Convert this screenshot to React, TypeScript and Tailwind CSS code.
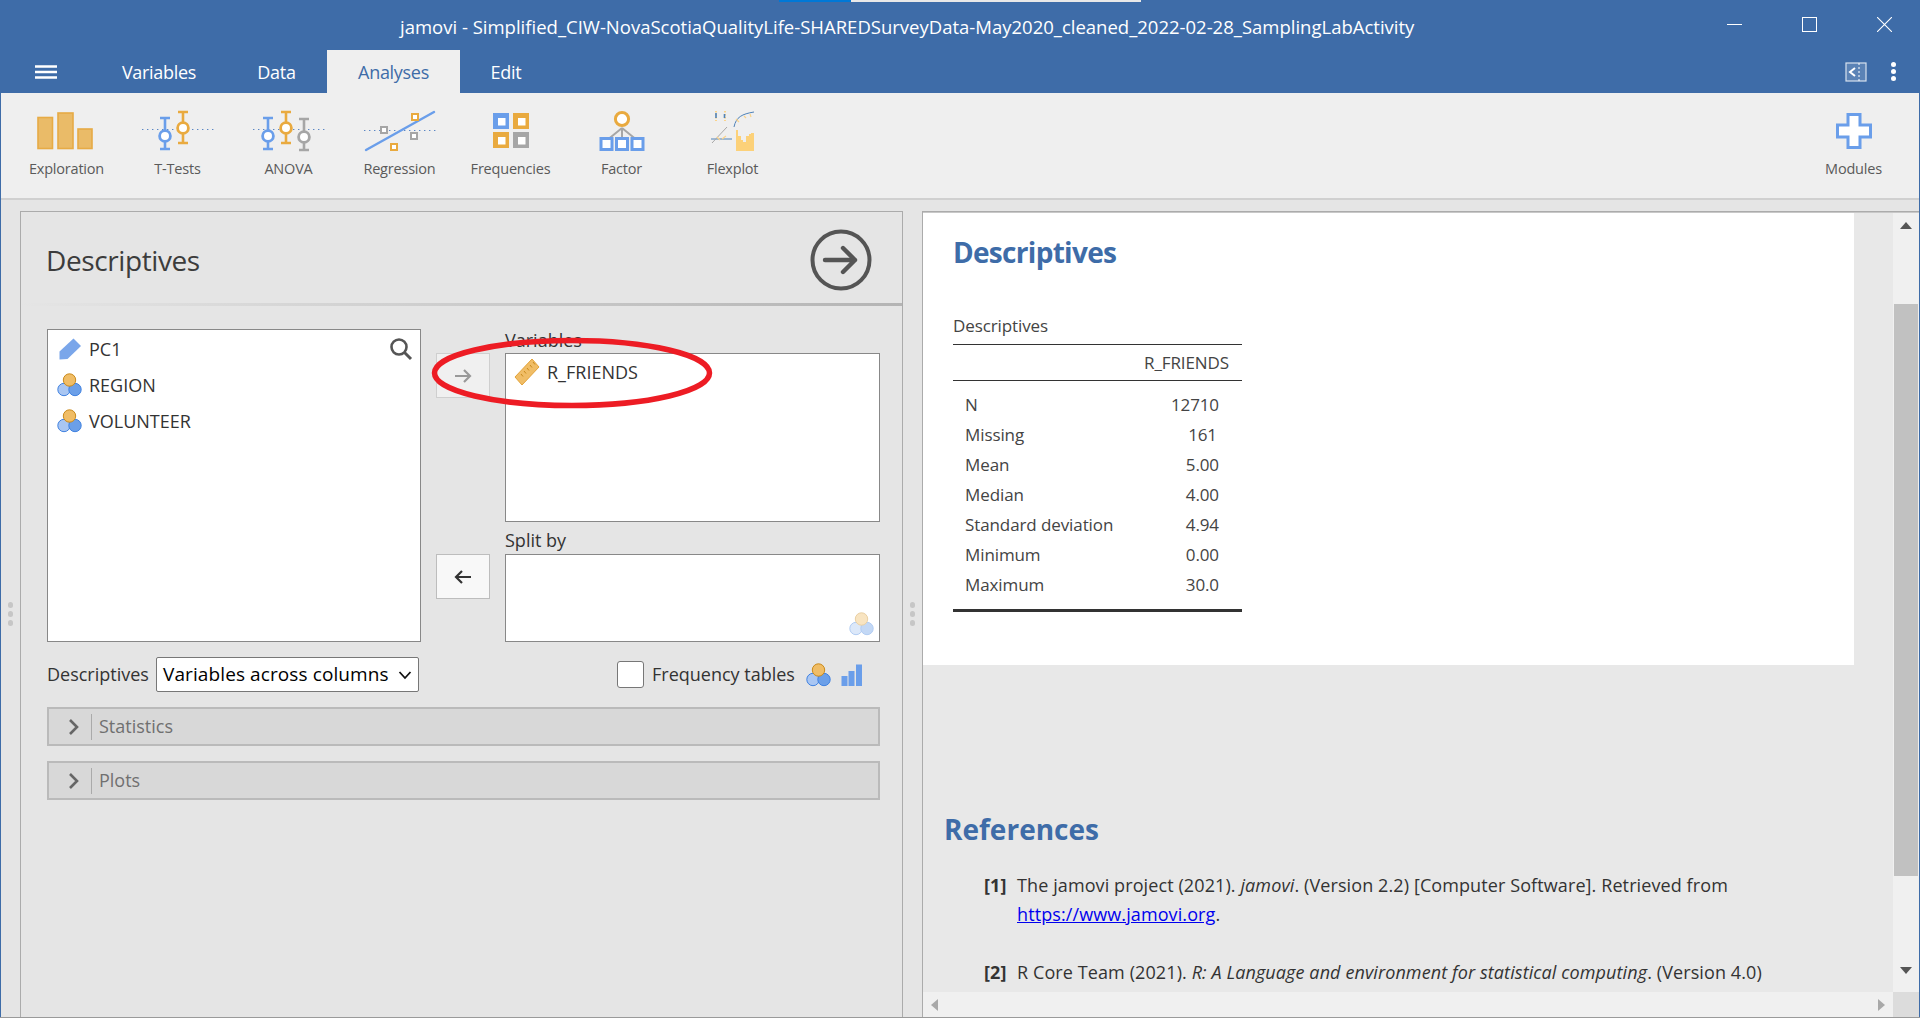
import React from "react";

const F = "font-['Open_Sans','Noto_Sans',sans-serif]";

function Nominal({ dim = false }: { dim?: boolean }) {
  return (
    <svg width="25" height="24" viewBox="0 0 25 24" className={dim ? "opacity-40 shrink-0" : "shrink-0"}>
      <circle cx="7" cy="16.5" r="6.2" fill="#a9c6f2" stroke="#3f81e0" strokeWidth="1" />
      <circle cx="18" cy="16.5" r="6.2" fill="#6b9fe8" stroke="#3f81e0" strokeWidth="1" />
      <circle cx="12.5" cy="7" r="6.2" fill="#f0bd66" stroke="#c98a1c" strokeWidth="1" />
    </svg>
  );
}

function Pencil() {
  return (
    <svg width="25" height="24" viewBox="0 0 25 24" className="shrink-0">
      <path d="M16.5 1.5 L24 9 L10.5 22 L2.5 22.5 L2.5 14.5 Z" fill="#7aa6ea" />
    </svg>
  );
}

function Ruler() {
  return (
    <svg width="26" height="28" viewBox="0 0 26 28" className="shrink-0">
      <path d="M18 1 L25 9 L8 27 L1 19 Z" fill="#f0bd66" stroke="#e3a33a" strokeWidth="1" />
      <path d="M7 16 L9 18.5 M10 13 L12 15.5 M13 10 L15 12.5 M16 7 L18 9.5 M19 4 L21 6.5" stroke="#c98a1c" strokeWidth="1" />
    </svg>
  );
}

function IconExploration() {
  return (
    <svg width="56" height="38" viewBox="0 0 56 38" className="mr-[4px]">
      <g fill="#eabb68" stroke="#e7ab45" strokeWidth="1.6">
        <rect x="1" y="5.5" width="14.5" height="31" />
        <rect x="21" y="1" width="15" height="35.5" />
        <rect x="41" y="17" width="14" height="19.5" />
      </g>
    </svg>
  );
}

function Whisker({ x, top, bottom, c, cy }: { x: number; top: number; bottom: number; c: string; cy: number }) {
  return (
    <g stroke={c} fill="none">
      <path d={`M${x - 5} ${top} H${x + 5} M${x - 5} ${bottom} H${x + 5} M${x} ${top} V${bottom}`} strokeWidth="2.6" />
      <circle cx={x} cy={cy} r="5.4" fill="#fff" strokeWidth="2.8" />
    </g>
  );
}

function IconTTests() {
  return (
    <svg width="72" height="42" viewBox="0 0 72 42">
      <path d="M0 19.5 H72" stroke="#5b86c4" strokeDasharray="1.4 3.6" strokeWidth="1" />
      <Whisker x={23} top={8} bottom={39} c="#6a9eea" cy={26} />
      <Whisker x={41} top={2} bottom={33} c="#e9aa3f" cy={18} />
    </svg>
  );
}

function IconAnova() {
  return (
    <svg width="72" height="42" viewBox="0 0 72 42">
      <path d="M0 19.5 H72" stroke="#5b86c4" strokeDasharray="1.4 3.6" strokeWidth="1" />
      <Whisker x={15} top={8} bottom={39} c="#6a9eea" cy={26} />
      <Whisker x={33} top={2} bottom={33} c="#e9aa3f" cy={18} />
      <Whisker x={51} top={9} bottom={40} c="#a6a6a6" cy={27} />
    </svg>
  );
}

function Sq({ x, y, c }: { x: number; y: number; c: string }) {
  return <rect x={x} y={y} width="6" height="6" fill="#fff" stroke={c} strokeWidth="2" />;
}

function IconRegression() {
  return (
    <svg width="72" height="42" viewBox="0 0 72 42">
      <path d="M0 20.5 H72" stroke="#5b86c4" strokeDasharray="1.4 3.6" strokeWidth="1" />
      <path d="M2 40 L70 2" stroke="#6a9eea" strokeWidth="2.4" strokeLinecap="round" />
      <Sq x={48} y={4} c="#e9aa3f" />
      <Sq x={17} y={17} c="#a6a6a6" />
      <Sq x={47} y={23} c="#a6a6a6" />
      <Sq x={27} y={34} c="#e9aa3f" />
    </svg>
  );
}

function Cell({ x, y, c }: { x: number; y: number; c: string }) {
  return (
    <g>
      <rect x={x} y={y} width="16" height="16" fill={c} />
      <rect x={x + 5} y={y + 5} width="7.5" height="7.5" fill="#fff" />
    </g>
  );
}

function IconFrequencies() {
  return (
    <svg width="36" height="36" viewBox="0 0 36 36">
      <Cell x={0} y={0} c="#6a9eea" />
      <Cell x={20} y={0} c="#e9aa3f" />
      <Cell x={0} y={19} c="#e9aa3f" />
      <Cell x={20} y={19} c="#a6a6a6" />
    </svg>
  );
}

function IconFactor() {
  return (
    <svg width="46" height="42" viewBox="0 0 46 42">
      <path d="M23 18 L7 31 M23 18 V31 M23 18 L39 31" stroke="#a6a6a6" strokeWidth="2" />
      <circle cx="23" cy="9" r="6.6" fill="#fff" stroke="#e9aa3f" strokeWidth="3" />
      {[2, 17.5, 33].map((x) => (
        <rect key={x} x={x} y="28.5" width="11" height="11" fill="#fff" stroke="#6a9eea" strokeWidth="3" />
      ))}
    </svg>
  );
}

function IconFlexplot() {
  return (
    <svg width="46" height="46" viewBox="0 0 46 44">
      <path d="M28 44 V23 H30 V29 H33 V33 H35 V35 H38 V29 H41 V27 H43 V26 H46 V44 Z" fill="#fcd179" transform="translate(-2 -2)" />
      <path d="M24 18 C26 8 32 5 44 3" stroke="#4f82b8" strokeWidth="1" fill="none" />
      <path d="M1 30 H22" stroke="#4f82b8" strokeWidth="1" />
      <path d="M2 34 L17 18" stroke="#a8a8a8" strokeWidth="1" />
      <path d="M6 2 V12 M15 2 V12" stroke="#fbd38a" strokeWidth="2" strokeDasharray="1.5 1.5" />
      <path d="M6 4 V9 M14.5 5 V9" stroke="#4f82b8" strokeWidth="1.6" />
      <path d="M26 10 L29 13 M34 7 L36 9 M40 5 L41 8 M12 30 L16 27 M7 28 L10 31" stroke="#fbd38a" strokeWidth="1.2" />
    </svg>
  );
}

function IconModules() {
  return (
    <svg width="36" height="36" viewBox="0 0 36 36">
      <path d="M12 1.5 H24 V12 H34.5 V24 H24 V34.5 H12 V24 H1.5 V12 H12 Z" fill="#fff" stroke="#6a9eea" strokeWidth="3" />
    </svg>
  );
}

function RibbonButton({ label, children }: { label: string; children: React.ReactNode }) {
  return (
    <div className="w-[111px] h-[72px] flex flex-col items-center justify-between">
      <div className="h-[48px] flex items-center justify-center">{children}</div>
      <span className="text-[14.5px] leading-[20px] text-[#5a5a5a] whitespace-nowrap tracking-[-0.2px]">{label}</span>
    </div>
  );
}

function Tab({ label, active, w }: { label: string; active?: boolean; w: string }) {
  return (
    <div
      className={`${w} h-[43px] flex items-center justify-center pt-[1px] text-[18px] tracking-[-0.3px] ${
        active ? "bg-[#efefef] text-[#3e6ca8]" : "text-white"
      }`}
    >
      {label}
    </div>
  );
}

function ListItem({ icon, label }: { icon: React.ReactNode; label: string }) {
  return (
    <div className="h-[36px] flex items-center gap-[7px] pl-[9px] text-[18px] text-[#333]">
      {icon}
      <span>{label}</span>
    </div>
  );
}

function Accordion({ label }: { label: string }) {
  return (
    <div className="h-[39px] bg-[#d8d8d8] border-2 border-[#bababa] flex items-center">
      <svg width="14" height="20" viewBox="0 0 14 20" className="ml-[18px]">
        <path d="M3 3 L10 10 L3 17" fill="none" stroke="#666" strokeWidth="2.6" />
      </svg>
      <div className="w-px h-[26px] bg-[#aaa] ml-[10px]" />
      <span className="ml-[7px] text-[18px] text-[#707070]">{label}</span>
    </div>
  );
}

function ArrowBtn({ dir, className }: { dir: "r" | "l"; className: string }) {
  return (
    <div className={`w-[54px] h-[45px] flex items-center justify-center border ${className}`}>
      <svg width="20" height="18" viewBox="0 0 20 18" fill="none" strokeWidth="2.2" stroke={dir === "r" ? "#999" : "#333"}>
        {dir === "r" ? <path d="M2 9 H17 M11 3 L17 9 L11 15" /> : <path d="M18 9 H3 M9 3 L3 9 L9 15" />}
      </svg>
    </div>
  );
}

function Grip() {
  return (
    <div className="w-[20px] shrink-0 flex flex-col items-center justify-center gap-[3px] pr-[1px]">
      <div className="w-[5px] h-[6px] rounded-full bg-[#c6c6c6]" />
      <div className="w-[5px] h-[6px] rounded-full bg-[#c6c6c6]" />
      <div className="w-[5px] h-[6px] rounded-full bg-[#c6c6c6]" />
    </div>
  );
}

const rows: [string, string, string][] = [
  ["N", "12710", "pr-[23px]"],
  ["Missing", "161", "pr-[25px]"],
  ["Mean", "5.00", "pr-[23px]"],
  ["Median", "4.00", "pr-[23px]"],
  ["Standard deviation", "4.94", "pr-[23px]"],
  ["Minimum", "0.00", "pr-[23px]"],
  ["Maximum", "30.0", "pr-[23px]"],
];

export default function App() {
  return (
    <div className={`${F} w-[1920px] h-[1018px] overflow-hidden relative flex flex-col bg-[#3e6ca8]`}>
      {/* top strip */}
      <div className="absolute top-0 left-[779px] w-[72px] h-[2px] bg-[#0078d7]" />
      <div className="absolute top-0 left-[851px] w-[290px] h-[2px] bg-[#e8e8e8]" />

      {/* title bar */}
      <div className="h-[50px] shrink-0 flex items-center relative pl-[400px] pt-[4px] text-white">
        <span className="text-[18.5px] whitespace-nowrap">
          jamovi - Simplified_CIW-NovaScotiaQualityLife-SHAREDSurveyData-May2020_cleaned_2022-02-28_SamplingLabActivity
        </span>
        <div className="absolute right-[28px] top-[17px] flex items-center gap-[60px]">
          <svg width="15" height="15" viewBox="0 0 15 15"><path d="M0 7.5 H15" stroke="#fff" strokeWidth="1" /></svg>
          <svg width="15" height="15" viewBox="0 0 15 15"><rect x="0.5" y="0.5" width="14" height="14" fill="none" stroke="#fff" strokeWidth="1" /></svg>
          <svg width="15" height="15" viewBox="0 0 15 15"><path d="M0 0 L15 15 M15 0 L0 15" stroke="#fff" strokeWidth="1.1" /></svg>
        </div>
      </div>

      {/* tab row */}
      <div className="h-[43px] shrink-0 flex items-center relative">
        <div className="w-[92px] flex justify-center">
          <svg width="24" height="16" viewBox="0 0 24 16">
            <path d="M1 2.5 H23 M1 8 H23 M1 13.5 H23" stroke="#fff" strokeWidth="2.4" />
          </svg>
        </div>
        <Tab label="Variables" w="w-[134px]" />
        <Tab label="Data" w="w-[101px]" />
        <Tab label="Analyses" w="w-[133px]" active />
        <Tab label="Edit" w="w-[92px]" />
        <div className="ml-auto flex items-center gap-[24px] pr-[24px]">
          <svg width="22" height="20" viewBox="0 0 22 20">
            <rect x="1" y="1" width="20" height="18" fill="#5b83b6" stroke="#d8e2ef" strokeWidth="1.2" />
            <path d="M10 6 L5 10 L10 14" fill="none" stroke="#fff" strokeWidth="2" />
            <path d="M14 1 V19" stroke="#fff" strokeWidth="1" strokeDasharray="2 2" />
          </svg>
          <div className="flex flex-col gap-[2px]">
            <div className="w-[5px] h-[5px] rounded-full bg-white" />
            <div className="w-[5px] h-[5px] rounded-full bg-white" />
            <div className="w-[5px] h-[5px] rounded-full bg-white" />
          </div>
        </div>
      </div>

      {/* ribbon */}
      <div className="h-[107px] shrink-0 ml-[1px] mr-[1px] bg-[#efefef] border-b-2 border-[#d0d0d0] flex items-start pt-[14px] pl-[10px] pr-[10px]">
        <RibbonButton label="Exploration"><IconExploration /></RibbonButton>
        <RibbonButton label="T-Tests"><IconTTests /></RibbonButton>
        <RibbonButton label="ANOVA"><IconAnova /></RibbonButton>
        <RibbonButton label="Regression"><IconRegression /></RibbonButton>
        <RibbonButton label="Frequencies"><IconFrequencies /></RibbonButton>
        <RibbonButton label="Factor"><IconFactor /></RibbonButton>
        <RibbonButton label="Flexplot"><IconFlexplot /></RibbonButton>
        <div className="ml-auto">
          <RibbonButton label="Modules"><IconModules /></RibbonButton>
        </div>
      </div>

      {/* main */}
      <div className="flex-1 min-h-0 ml-[1px] mr-[1px] bg-[#e5e5e5] flex pt-[11px] overflow-hidden">
        <div className="w-[19px] shrink-0 flex items-center justify-center">
          <Grip />
        </div>

        {/* options panel */}
        <div className="w-[883px] shrink-0 border border-[#ababab] border-b-0 flex flex-col relative">
          <div className="h-[91px] shrink-0 flex items-center justify-between pl-[25px] pr-[30px] pt-[4px] relative">
            <span className="text-[28px] text-[#3c3c3c] tracking-[-0.4px]">Descriptives</span>
            <svg width="62" height="62" viewBox="0 0 62 62">
              <circle cx="31" cy="31" r="28.5" fill="none" stroke="#555" strokeWidth="4" />
              <path d="M15 31 H45 M33 19 L45 31 L33 43" fill="none" stroke="#555" strokeWidth="4.4" strokeLinecap="round" strokeLinejoin="round" />
            </svg>
            <div className="absolute left-0 right-0 bottom-[-3px] h-[3px] bg-gradient-to-r from-[#e5e5e5] to-[#b4b4b4]" />
          </div>

          <div className="pl-[26px] pr-[22px] pt-[26px]">
            <div className="flex h-[313px]">
              <div className="w-[374px] shrink-0 bg-white border border-[#888] relative pt-[1px] pb-[1px]">
                <ListItem icon={<Pencil />} label="PC1" />
                <ListItem icon={<Nominal />} label="REGION" />
                <ListItem icon={<Nominal />} label="VOLUNTEER" />
                <svg width="24" height="24" viewBox="0 0 24 24" className="absolute top-[7px] right-[7px]">
                  <circle cx="10" cy="10" r="7.5" fill="none" stroke="#555" strokeWidth="2.6" />
                  <path d="M15.5 15.5 L22 22" stroke="#555" strokeWidth="3" />
                </svg>
              </div>

              <div className="w-[84px] shrink-0 flex flex-col pl-[15px]">
                <div className="mt-[24px]">
                  <ArrowBtn dir="r" className="bg-[#f0f0f0] border-[#cfcfcf]" />
                </div>
                <div className="mt-[156px]">
                  <ArrowBtn dir="l" className="bg-[#f8f8f8] border-[#bdbdbd]" />
                </div>
              </div>

              <div className="w-[375px] shrink-0 flex flex-col">
                <div className="h-[24px] text-[18px] text-[#333] leading-[24px] -mt-[1px] mb-[1px]">Variables</div>
                <div className="h-[169px] bg-white border border-[#888]">
                  <div className="h-[36px] flex items-center gap-[7px] pl-[8px] text-[18px] text-[#333]">
                    <Ruler />
                    <span className="pt-[1px]">R_FRIENDS</span>
                  </div>
                </div>
                <div className="h-[32px] text-[18px] text-[#333] leading-[37px]">Split by</div>
                <div className="h-[88px] bg-white border border-[#888] relative flex justify-end items-end pr-[5px] pb-[5px]">
                  <Nominal dim />
                </div>
              </div>
            </div>

            <div className="flex items-center h-[35px] mt-[15px]">
              <span className="text-[18px] text-[#333] w-[109px]">Descriptives</span>
              <div className="w-[263px] h-[35px] bg-white border border-[#777] rounded-[2px] flex items-center justify-between pl-[6px] pr-[6px] text-[19px] text-black tracking-[0.1px]">
                <span className="whitespace-nowrap">Variables across columns</span>
                <svg width="14" height="10" viewBox="0 0 14 10"><path d="M1.5 2 L7 8 L12.5 2" fill="none" stroke="#111" strokeWidth="1.8" /></svg>
              </div>
              <div className="w-[27px] h-[27px] bg-white border border-[#777] rounded-[3px] ml-[198px]" />
              <span className="text-[18px] text-[#333] ml-[8px]">Frequency tables</span>
              <div className="ml-[11px]"><Nominal /></div>
              <svg width="22" height="22" viewBox="0 0 22 22" className="ml-[10px]">
                <rect x="0.5" y="12" width="6" height="10" fill="#6a9eea" />
                <rect x="7.5" y="7" width="6" height="15" fill="#6a9eea" />
                <rect x="15" y="0.5" width="6" height="21.5" fill="#6a9eea" />
              </svg>
            </div>

            <div className="flex flex-col gap-[15px] mt-[15px]">
              <Accordion label="Statistics" />
              <Accordion label="Plots" />
            </div>
          </div>
        </div>

        <div className="w-[19px] shrink-0 flex items-center justify-center">
          <Grip />
        </div>

        {/* results panel */}
        <div className="flex-1 min-w-0 border border-[#ababab] border-b-0 border-r-0 flex flex-col">
          <div className="flex flex-1 min-h-0 border-t border-[#c8c8c8]">
            <div className="flex-1 min-w-0 flex flex-col">
              <div className="flex-1 min-h-0 flex overflow-hidden">
                <div className="flex-1 min-w-0 overflow-hidden bg-[#e8e8e8]">
                  <div className="w-[931px] h-[452px] bg-white pl-[30px] pt-[19px]">
                    <h1 className="text-[28px] leading-[40px] font-bold text-[#3e6ca8] tracking-[-0.7px]">Descriptives</h1>
                    <div className="w-[289px] mt-[37px] text-[#444] text-[17px] tracking-[-0.1px]">
                      <div className="h-[36px] leading-[33px] border-b border-[#333]">Descriptives</div>
                      <div className="h-[36px] flex items-center justify-end pr-[13px] border-b border-[#333]">R_FRIENDS</div>
                      <div className="pt-[9px] pb-[9px] border-b-[3px] border-[#333]">
                        {rows.map(([a, b, p]) => (
                          <div key={a} className={`h-[30px] flex items-center justify-between pl-[12px] ${p}`}>
                            <span>{a}</span>
                            <span>{b}</span>
                          </div>
                        ))}
                      </div>
                    </div>
                  </div>
                  <div className="pl-[21px] pt-[141px] h-[330px]">
                    <h2 className="text-[28px] leading-[40px] font-bold text-[#3e6ca8] mt-[3px]">References</h2>
                    <div className="pl-[40px] pt-[22px] text-[18px] text-[#333] tracking-[0.1px] leading-[29px]">
                      <div className="flex">
                        <b className="w-[33px] shrink-0">[1]</b>
                        <div>
                          The jamovi project (2021). <i>jamovi</i>. (Version 2.2) [Computer Software]. Retrieved from
                          <br />
                          <span className="text-[#0000ee] underline">https://www.jamovi.org</span>.
                        </div>
                      </div>
                      <div className="flex mt-[29px]">
                        <b className="w-[33px] shrink-0">[2]</b>
                        <div className="whitespace-nowrap">
                          R Core Team (2021). <i>R: A Language and environment for statistical computing</i>. (Version 4.0)
                        </div>
                      </div>
                    </div>
                  </div>
                </div>
                {/* vertical scrollbar */}
                <div className="w-[26px] shrink-0 bg-[#f0f0f0] flex flex-col items-center pt-[9px]">
                  <svg width="12" height="7" viewBox="0 0 12 7"><path d="M6 0 L12 7 H0 Z" fill="#555" /></svg>
                  <div className="w-[24px] h-[572px] bg-[#c1c1c1] mt-[75px]" />
                  <svg width="12" height="7" viewBox="0 0 12 7" className="mt-[91px]"><path d="M6 7 L12 0 H0 Z" fill="#555" /></svg>
                </div>
              </div>
              {/* horizontal scrollbar */}
              <div className="h-[25px] shrink-0 bg-[#f0f0f0] flex">
                <div className="flex-1 flex items-center justify-between px-[8px]">
                  <svg width="7" height="12" viewBox="0 0 7 12"><path d="M0 6 L7 0 V12 Z" fill="#a8a8a8" /></svg>
                  <svg width="7" height="12" viewBox="0 0 7 12"><path d="M7 6 L0 0 V12 Z" fill="#a8a8a8" /></svg>
                </div>
                <div className="w-[26px] bg-[#dcdcdc]" />
              </div>
            </div>
          </div>
        </div>
      </div>
      <div className="h-px shrink-0 bg-[#9a9a9a]" />

      {/* hand-drawn annotation */}
      <svg width="290" height="80" viewBox="0 0 290 80" className="absolute left-[427px] top-[333px] pointer-events-none">
        <ellipse cx="145" cy="40" rx="137.5" ry="32.5" fill="none" stroke="#ed1c24" strokeWidth="5.5" />
      </svg>
    </div>
  );
}
